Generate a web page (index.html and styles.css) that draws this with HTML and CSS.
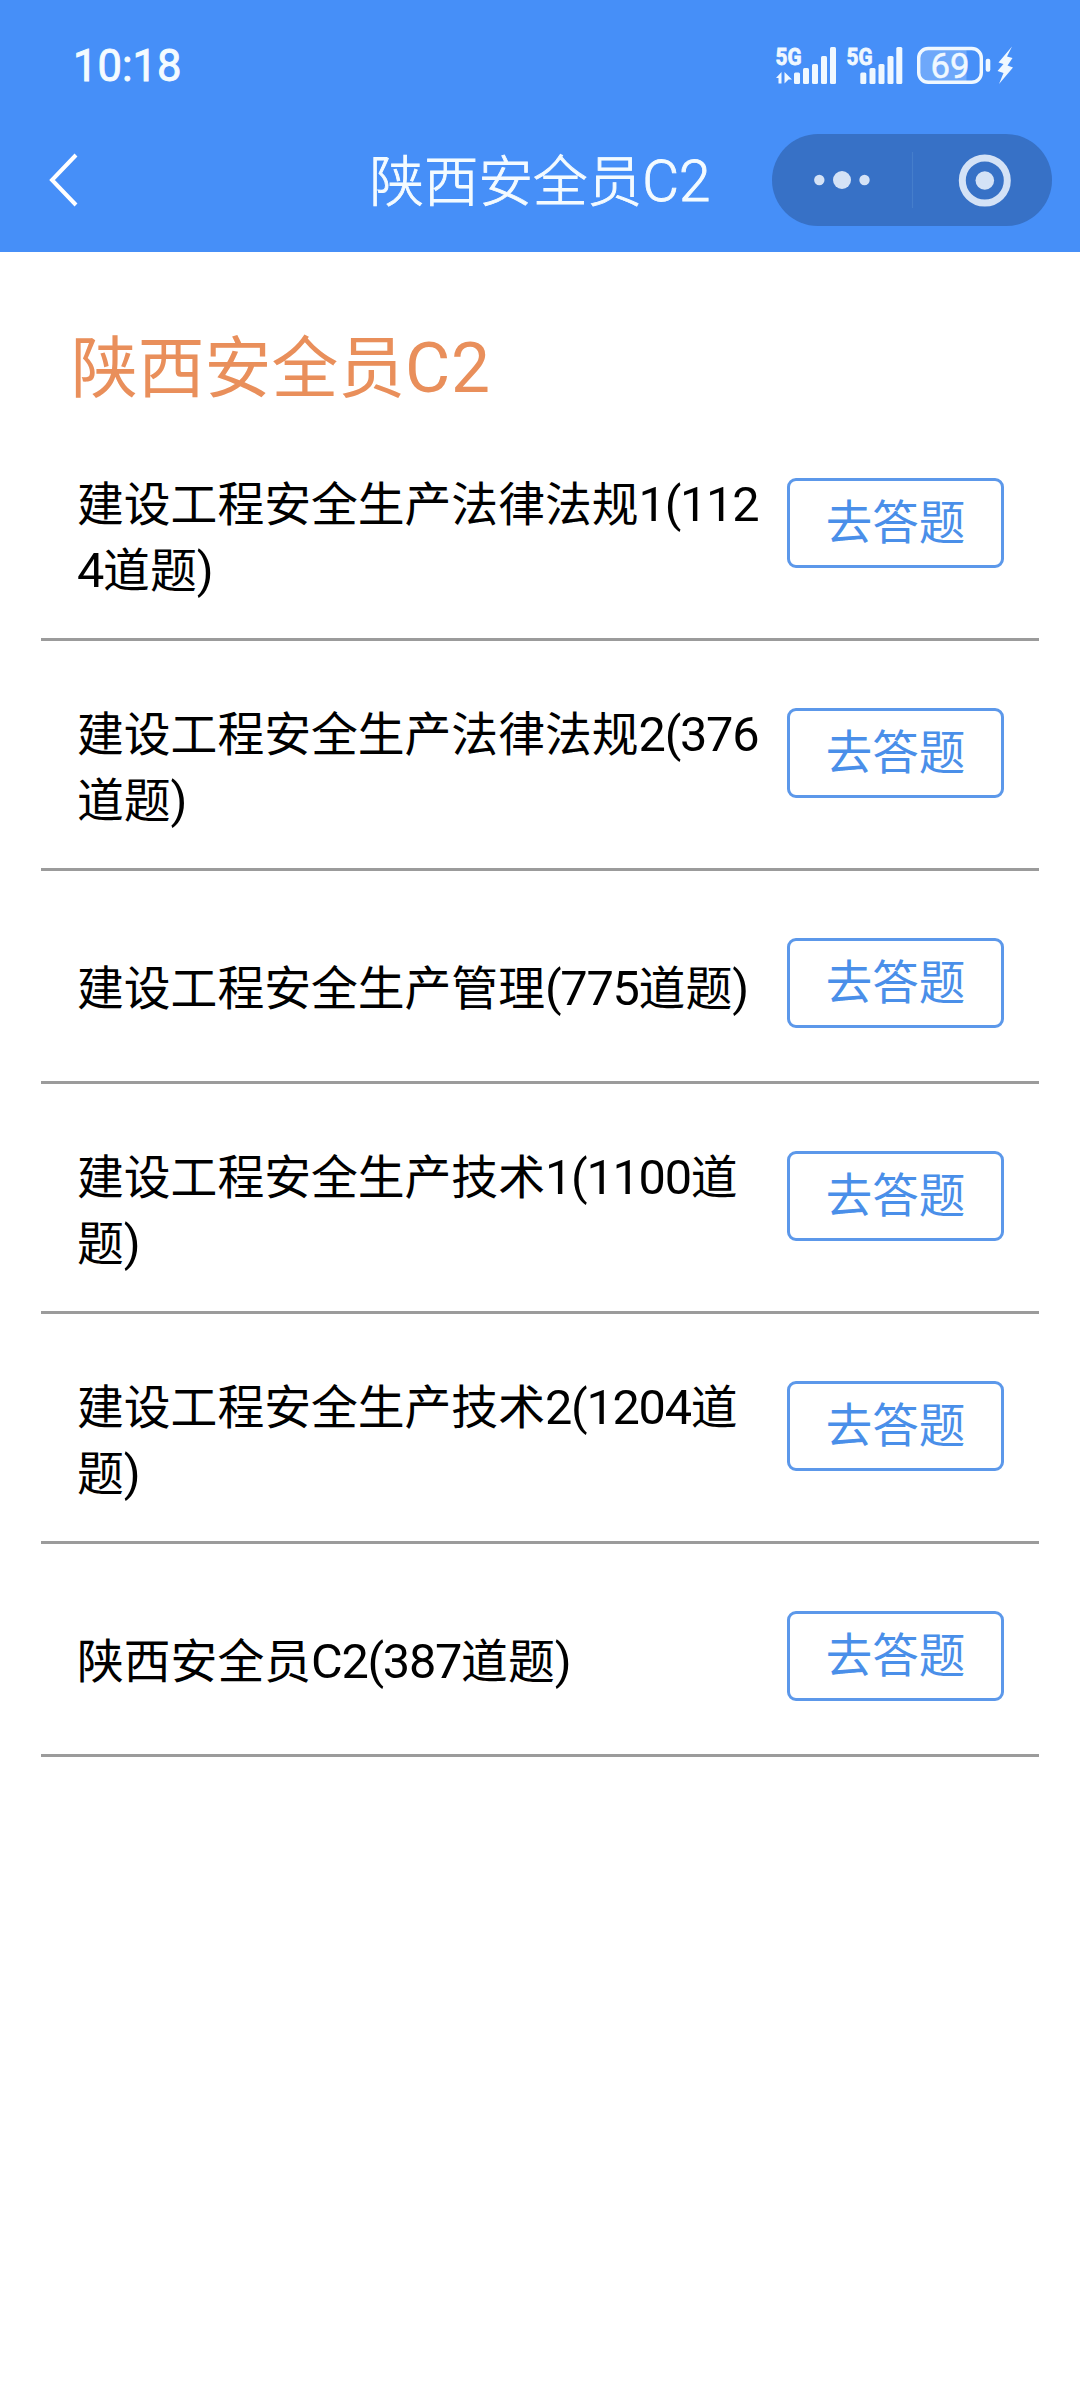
FILE: index.html
```html
<!DOCTYPE html>
<html lang="zh-CN">
<head>
<meta charset="utf-8">
<title>陕西安全员C2</title>
<link rel="stylesheet" href="styles.css">
</head>
<body>
<header class="header">
  <div class="status">
    <span class="clock">10:18</span>
    <svg class="status-icons" width="240" height="46" viewBox="774 42 240 46" fill="#f0f8ff">
      <text class="net" x="775.500" y="65" textLength="26" lengthAdjust="spacingAndGlyphs">5G</text>
      <path d="M776 78L781.500 72V83.500H778.500V78ZM784.500 72L792 79.500H788.500L784.500 83.500Z"/>
      <rect x="794" y="72.500" width="6" height="11.500" rx="1.500"/><rect x="803" y="68" width="6" height="16" rx="1.500"/><rect x="812" y="64" width="6" height="20" rx="1.500"/><rect x="821" y="56" width="6" height="28" rx="1.500"/><rect x="830" y="47" width="6" height="37" rx="1.500"/>
      <text class="net" x="846.500" y="65" textLength="26" lengthAdjust="spacingAndGlyphs">5G</text>
      <rect x="860.300" y="72.500" width="6" height="11.500" rx="1.500"/><rect x="869.500" y="68" width="6" height="16" rx="1.500"/><rect x="878.500" y="64" width="6" height="20" rx="1.500"/><rect x="887.500" y="56" width="6" height="28" rx="1.500"/><rect x="896.300" y="47" width="6" height="37" rx="1.500"/>
      <path d="M966.500 48.500V82H928a9 9 0 0 1-9-9V57.500a9 9 0 0 1 9-9Z" fill="#6ea8fa"/>
      <rect x="918.700" y="48.500" width="62.600" height="33.800" rx="9.500" fill="none" stroke="#f0f8ff" stroke-width="3.400"/>
      <rect x="985.700" y="58.700" width="4.600" height="13" rx="2"/>
      <text class="level" x="930.500" y="77.500" textLength="39" lengthAdjust="spacingAndGlyphs">69</text>
      <path d="M1012 46.500L998.500 62.500 1003.500 64 997.500 71 1003.500 73 999 84 1013 67.500 1007.500 65.500 1012.500 58 1007 56.500Z"/>
    </svg>
  </div>
  <nav class="nav">
    <svg class="back" width="32" height="56" viewBox="0 0 32 56" fill="none" stroke="#fff" stroke-width="4"><path d="M28 3L4 28L28 53"/></svg>
    <h1 class="title">陕西安全员<span class="latin">C2</span></h1>
    <svg class="capsule" width="280" height="92" viewBox="0 0 280 92" fill="#d4e2f6">
      <rect width="280" height="92" rx="46" fill="#3771c6"/>
      <circle cx="47.300" cy="46" r="5.200"/><circle cx="70" cy="46" r="9"/><circle cx="92.500" cy="46" r="5.200"/>
      <path d="M140.500 18V74" stroke="#457ecb" stroke-width="1.200"/>
      <circle cx="212.800" cy="46.500" r="22.500" fill="none" stroke="#d4e2f6" stroke-width="7"/><circle cx="212.800" cy="46.500" r="9.300"/>
    </svg>
  </nav>
</header>
<main class="content">
  <h2 class="heading">陕西安全员<span class="latin">C2</span></h2>
  <ul class="list">
    <li class="row"><p class="name">建设工程安全生产法律法规<span class="latin">1(112</span><br><span class="latin">4</span>道题<span class="latin">)</span></p><button class="go">去答题</button></li>
    <li class="row"><p class="name">建设工程安全生产法律法规<span class="latin">2(376</span><br>道题<span class="latin">)</span></p><button class="go">去答题</button></li>
    <li class="row"><p class="name">建设工程安全生产管理<span class="latin">(775</span>道题<span class="latin">)</span></p><button class="go">去答题</button></li>
    <li class="row"><p class="name">建设工程安全生产技术<span class="latin">1(1100</span>道<br>题<span class="latin">)</span></p><button class="go">去答题</button></li>
    <li class="row"><p class="name">建设工程安全生产技术<span class="latin">2(1204</span>道<br>题<span class="latin">)</span></p><button class="go">去答题</button></li>
    <li class="row"><p class="name">陕西安全员<span class="latin">C2(387</span>道题<span class="latin">)</span></p><button class="go">去答题</button></li>
  </ul>
</main>
</body>
</html>
```
FILE: styles.css
```css
* { box-sizing: border-box; margin: 0; padding: 0; }
body {
  min-height: 2398px;
  background: #fff;
  color: #000;
  font-family: "Noto Sans CJK SC", sans-serif;
}
.latin { font-family: Roboto, sans-serif; font-size: 1.04em; line-height: 1; }
.header { height: 252px; background: #468ff8; color: #f4fbff; }
.status {
  display: flex;
  justify-content: space-between;
  align-items: center;
  height: 130px;
  padding: 0 66px 0 73px;
}
.clock { padding-top: 3px; font: 400 43.500px/1 Roboto, sans-serif; -webkit-text-stroke: 0.900px #f4fbff; }
.status-icons { flex: none; }
.net { font: 700 24px Roboto, sans-serif; stroke: #f0f8ff; stroke-width: 0.800px; }
.level { font: 400 35px Roboto, sans-serif; stroke: #f0f8ff; stroke-width: 0.500px; }
.nav {
  display: grid;
  grid-template-columns: 280px 1fr 280px;
  align-items: center;
  height: 100px;
  padding: 0 28px 0 28px;
}
.back { margin-left: 20px; }
.title {
  padding-bottom: 5px;
  font-size: 54.500px;
  font-weight: 300;
  line-height: 80px;
  text-align: center;
  white-space: nowrap;
  -webkit-text-stroke: 0.900px #f4fbff;
}
.content { padding: 67px 41px 0; }
.heading { padding: 0 0 4px 30px; color: #e98f5b; font-size: 66.800px; font-weight: 400; line-height: 88px; }
.heading .latin { letter-spacing: 0.010em; }
.list { list-style: none; }
.row {
  display: flex;
  align-items: flex-start;
  justify-content: space-between;
  padding: 57px 35px 39px 36px;
  border-bottom: 3px solid #9b9b9b;
}
.name { align-self: center; font-size: 46.800px; line-height: 65.500px; white-space: nowrap; }
.name .latin { letter-spacing: -0.026em; }
.go {
  flex: none;
  width: 217px;
  height: 90px;
  margin: 10px 0 14px;
  padding-bottom: 7px;
  border: 3px solid #5c98ea;
  border-radius: 9px;
  background: #fff;
  color: #4a8fe9;
  font: 400 46.500px/1 "Noto Sans CJK SC", sans-serif;
}
```
